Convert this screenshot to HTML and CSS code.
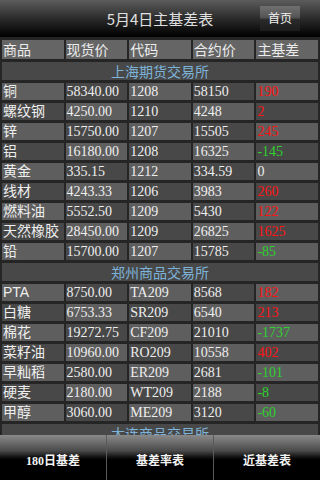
FILE: index.html
```html
<!DOCTYPE html>
<html lang="zh-CN">

<head>
 <meta charset="UTF-8">
 <meta name="viewport" content="width=device-width, initial-scale=1.0">
 <title>5月4日主基差表</title>
 <link rel="stylesheet" href="styles.css">
</head>

<body>
 <!-- Top bar -->
 <div class="topbar">
  <span></span>
  <div class="title">5月4日主基差表</div>
  <a class="home" href="#">首页</a>
 </div>

 <table class="grid">
  <thead>
   <tr>
    <th>商品</th>
    <th>现货价</th>
    <th>代码</th>
    <th>合约价</th>
    <th>主基差</th>
   </tr>
  </thead>
  <!-- Shanghai -->
  <tbody>
   <tr class="section"><td colspan="5">上海期货交易所</td></tr>
   <tr><td>铜</td><td>58340.00</td><td>1208</td><td>58150</td><td class="up">190</td></tr>
   <tr><td>螺纹钢</td><td>4250.00</td><td>1210</td><td>4248</td><td class="up">2</td></tr>
   <tr><td>锌</td><td>15750.00</td><td>1207</td><td>15505</td><td class="up">245</td></tr>
   <tr><td>铝</td><td>16180.00</td><td>1208</td><td>16325</td><td class="down">-145</td></tr>
   <tr><td>黄金</td><td>335.15</td><td>1212</td><td>334.59</td><td>0</td></tr>
   <tr><td>线材</td><td>4243.33</td><td>1206</td><td>3983</td><td class="up">260</td></tr>
   <tr><td>燃料油</td><td>5552.50</td><td>1209</td><td>5430</td><td class="up">122</td></tr>
   <tr><td>天然橡胶</td><td>28450.00</td><td>1209</td><td>26825</td><td class="up">1625</td></tr>
   <tr><td>铅</td><td>15700.00</td><td>1207</td><td>15785</td><td class="down">-85</td></tr>
  </tbody>
  <!-- Zhengzhou -->
  <tbody>
   <tr class="section"><td colspan="5">郑州商品交易所</td></tr>
   <tr><td class="latin">PTA</td><td>8750.00</td><td>TA209</td><td>8568</td><td class="up">182</td></tr>
   <tr><td>白糖</td><td>6753.33</td><td>SR209</td><td>6540</td><td class="up">213</td></tr>
   <tr><td>棉花</td><td>19272.75</td><td>CF209</td><td>21010</td><td class="down">-1737</td></tr>
   <tr><td>菜籽油</td><td>10960.00</td><td>RO209</td><td>10558</td><td class="up">402</td></tr>
   <tr><td>早籼稻</td><td>2580.00</td><td>ER209</td><td>2681</td><td class="down">-101</td></tr>
   <tr><td>硬麦</td><td>2180.00</td><td>WT209</td><td>2188</td><td class="down">-8</td></tr>
   <tr><td>甲醇</td><td>3060.00</td><td>ME209</td><td>3120</td><td class="down">-60</td></tr>
  </tbody>
  <!-- Dalian -->
  <tbody>
   <tr class="section"><td colspan="5">大连商品交易所</td></tr>
  </tbody>
 </table>

 <!-- Bottom tabs -->
 <div class="tabbar">
  <a class="tab" href="#">180日基差</a>
  <a class="tab" href="#">基差率表</a>
  <a class="tab" href="#">近基差表</a>
 </div>
</body>

</html>
```

FILE: styles.css
```css
body {
 margin: 0;
 background-color: #252525;
 font-family: "Liberation Serif", "Noto Sans CJK SC", serif;
 color: #eeeeee;
}

.topbar {
 display: grid;
 grid-template-columns: 1fr auto 1fr;
 align-items: center;
 height: 37px;
 background: linear-gradient(to bottom, #5c5c5c 0%, #303030 45%, #0c0c0c 85%, #000 100%);
}

.title {
 font-family: "Noto Sans CJK SC", sans-serif;
 font-size: 15px;
 color: #e0e0e0;
 line-height: 37px;
}

.home {
 justify-self: end;
 margin-right: 20px;
 width: 40px;
 height: 25px;
 line-height: 24px;
 text-align: center;
 font-family: "Noto Sans CJK SC", sans-serif;
 font-size: 12px;
 color: #f2f2f2;
 text-decoration: none;
 background: linear-gradient(to bottom, #707070 0%, #555 45%, #2a2a2a 55%, #1c1c1c 100%);
}

.grid {
 width: 100%;
 table-layout: fixed;
 border-spacing: 2px 3px;
 margin-top: -3px;
 padding-top: 3px;
}

.grid th,
.grid td {
 height: 17px;
 padding: 0 1px;
 font-size: 14px;
 line-height: 17px;
 font-weight: normal;
 text-align: left;
 white-space: nowrap;
 overflow: hidden;
}

.grid th {
 height: 19px;
 background-color: #656565;
 font-family: "Noto Sans CJK SC", sans-serif;
 color: #ececec;
}

/* checkerboard cells, restarting in each exchange block */
.grid tbody tr:nth-child(even) td:nth-child(odd),
.grid tbody tr:nth-child(odd) td:nth-child(even) {
 background-color: #5e5e5e;
}

.grid tbody tr:nth-child(even) td:nth-child(even),
.grid tbody tr:nth-child(odd) td:nth-child(odd) {
 background-color: #484848;
}

.grid tr.section td {
 background-color: #4a4a4a;
 text-align: center;
 font-family: "Noto Sans CJK SC", sans-serif;
 color: #7db3d8;
 overflow: visible;
 line-height: 18px;
}

.grid td.latin {
 font-family: "Liberation Sans", sans-serif;
}

.grid td.up {
 color: #ff1414;
}

.grid td.down {
 color: #2ed12e;
}

.tabbar {
 position: fixed;
 left: 0;
 right: 0;
 bottom: 0;
 display: flex;
 height: 45px;
 background: linear-gradient(to bottom, #8a8a8a 0%, #4a4a4a 35%, #151515 48%, #000 55%, #000 100%);
}

.tab {
 flex: 1;
 padding-top: 16px;
 text-align: center;
 font-family: "Liberation Serif", "Noto Sans CJK SC", serif;
 font-size: 12px;
 font-weight: bold;
 color: #f4f4f4;
 text-decoration: none;
}

.tab + .tab {
 border-left: 1px solid #5a5a5a;
}
```
